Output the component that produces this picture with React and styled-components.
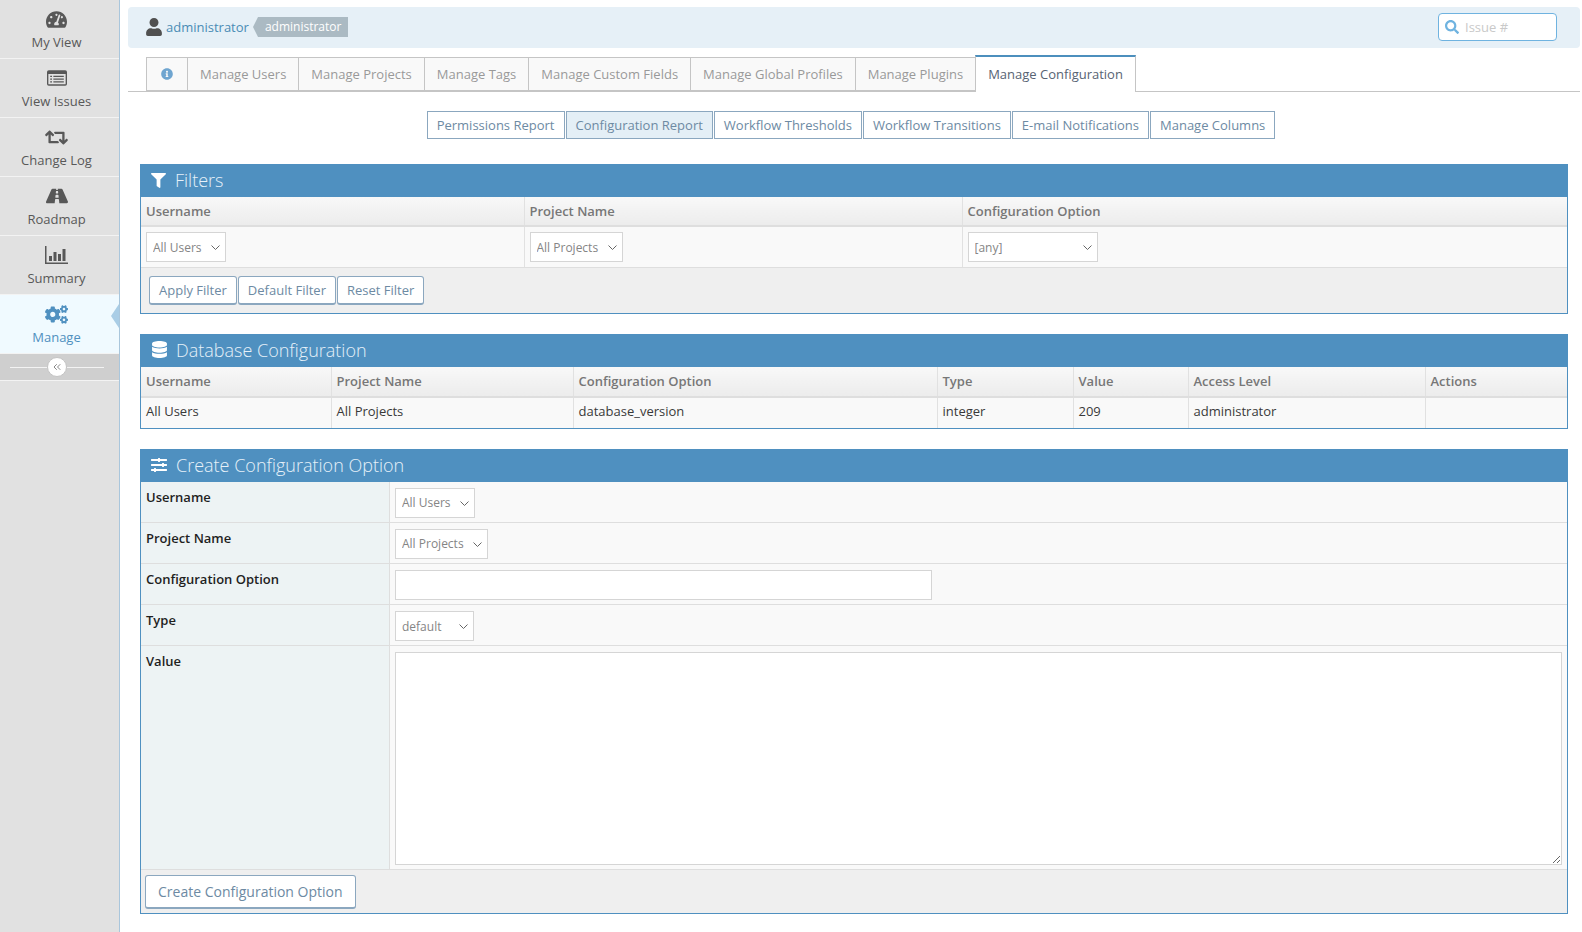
import React from "react";
import styled, { createGlobalStyle } from "styled-components";
import {
  FaTachometerAlt,
  FaRetweet,
  FaRoad,
  FaCogs,
  FaUser,
  FaInfoCircle,
  FaSearch,
  FaFilter,
  FaDatabase,
  FaSlidersH,
} from "react-icons/fa";
import { FiChevronsLeft } from "react-icons/fi";

const GlobalStyle = createGlobalStyle`
  html, body {
    margin: 0;
    padding: 0;
    background: #fff;
    font-family: "Open Sans", "Liberation Sans", sans-serif;
    font-size: 13px;
    color: #393939;
    overflow: hidden;
  }
  * { box-sizing: border-box; }
`;

const ListIcon = () => (
  <svg width="20" height="16" viewBox="0 0 22 17">
    <path
      fill="currentColor"
      fillRule="evenodd"
      d="M2 0h18a2 2 0 0 1 2 2v13a2 2 0 0 1-2 2H2a2 2 0 0 1-2-2V2a2 2 0 0 1 2-2zM1.500 4v11a.5.5 0 0 0 .5.5h18a.5.5 0 0 0 .5-.5V4z"
    />
    <path
      fill="currentColor"
      d="M3.500 6h2v1.500h-2zM3.500 9h2v1.500h-2zM3.500 12h2v1.500h-2zM7 6h11.500v1.500H7zM7 9h11.500v1.500H7zM7 12h11.500v1.500H7z"
    />
  </svg>
);

const ChartIcon = () => (
  <svg width="23" height="18" viewBox="0 0 23 18">
    <path fill="currentColor" d="M0 0h1.500v16.500H23V18H0z" />
    <path fill="currentColor" d="M4 10h3v5H4zM8.500 6h3v9h-3zM13 8h3v7h-3zM17.500 3h3v12h-3z" />
  </svg>
);

const Chevron = () => (
  <svg width="9" height="5" viewBox="0 0 9 5">
    <path d="M.5.5l4 4 4-4" fill="none" stroke="#666" strokeWidth="1" />
  </svg>
);

const navItems = [
  { label: "My View", icon: <FaTachometerAlt size={21} /> },
  { label: "View Issues", icon: <ListIcon /> },
  { label: "Change Log", icon: <FaRetweet size={23} /> },
  { label: "Roadmap", icon: <FaRoad size={22} /> },
  { label: "Summary", icon: <ChartIcon /> },
  { label: "Manage", icon: <FaCogs size={23} />, active: true },
];

const tabs = [
  "Manage Users",
  "Manage Projects",
  "Manage Tags",
  "Manage Custom Fields",
  "Manage Global Profiles",
  "Manage Plugins",
];

const reports = [
  { label: "Permissions Report" },
  { label: "Configuration Report", active: true },
  { label: "Workflow Thresholds" },
  { label: "Workflow Transitions" },
  { label: "E-mail Notifications" },
  { label: "Manage Columns" },
];

const dbColumns = [
  { label: "Username", width: 190 },
  { label: "Project Name", width: 242 },
  { label: "Configuration Option", width: 364 },
  { label: "Type", width: 136 },
  { label: "Value", width: 115 },
  { label: "Access Level", width: 237 },
  { label: "Actions" },
];

const dbRow = ["All Users", "All Projects", "database_version", "integer", "209", "administrator", ""];

const Page = styled.div`
  display: flex;
  min-height: 100vh;
`;

const Sidebar = styled.nav`
  width: 120px;
  flex: none;
  background: #e1e1e1;
  border-right: 1px solid #a9c6dc;
`;

const NavItem = styled.a`
  position: relative;
  display: flex;
  flex-direction: column;
  align-items: center;
  height: 59px;
  padding: 7px 6px 0 0;
  border-bottom: 1px solid #f3f3f3;
  background: ${(p) => (p.$active ? "#f0faff" : "#e1e1e1")};
  color: ${(p) => (p.$active ? "#4f90c0" : "#585858")};
  ${(p) =>
    p.$active &&
    `&::after {
      content: "";
      position: absolute;
      right: 0;
      top: 9px;
      border-style: solid;
      border-width: 12px 8px 12px 0;
      border-color: transparent #a9cde6 transparent transparent;
    }`}
`;

const NavIcon = styled.span`
  display: flex;
  align-items: center;
  justify-content: center;
  height: 24px;
`;

const NavLabel = styled.span`
  margin-top: 2px;
  line-height: 18px;
  font-size: 13px;
`;

const Toggler = styled.div`
  display: flex;
  align-items: center;
  height: 27px;
  padding: 0 15px 0 10px;
  background: #cfcfcf;
  border-bottom: 1px solid #f3f3f3;
`;

const TogglerLine = styled.span`
  flex: 1;
  height: 1px;
  background: #f3f3f3;
`;

const TogglerButton = styled.span`
  display: flex;
  align-items: center;
  justify-content: center;
  width: 20px;
  height: 20px;
  border-radius: 50%;
  background: #fff;
  border: 1px solid #c4c4c4;
  color: #888;
  font-size: 12px;
`;

const Main = styled.main`
  flex: 1;
  min-width: 0;
  padding: 7px 2px 0 8px;
`;

const TopBar = styled.header`
  display: flex;
  align-items: center;
  justify-content: space-between;
  height: 41px;
  padding: 0 23px 2px 17px;
  background: #e6f0f7;
  border-radius: 4px;
`;

const UserBox = styled.div`
  display: flex;
  align-items: center;
`;

const UserIcon = styled.span`
  display: flex;
  color: #505050;
  margin-right: 3px;
`;

const UserLink = styled.a`
  color: #4a8cb5;
  font-size: 13px;
`;

const Badge = styled.span`
  position: relative;
  margin-left: 9px;
  height: 20px;
  line-height: 20px;
  padding: 0 7px;
  background: #abbac3;
  color: #fff;
  font-size: 12px;
  &::before {
    content: "";
    position: absolute;
    left: -5px;
    top: 0;
    border-style: solid;
    border-width: 10px 5px 10px 0;
    border-color: transparent #abbac3 transparent transparent;
  }
`;

const SearchBox = styled.label`
  display: flex;
  align-items: center;
  gap: 6px;
  width: 119px;
  height: 28px;
  padding: 0 6px;
  background: #fff;
  border: 1px solid #6fb3e0;
  border-radius: 4px;
  color: #6fb3e0;
`;

const SearchInput = styled.input`
  width: 70px;
  border: 0;
  outline: 0;
  padding: 0;
  font: inherit;
  &::placeholder {
    color: #c9c9c9;
  }
`;

const TabRow = styled.div`
  display: flex;
  height: 35px;
  margin-top: 9px;
  padding-left: 18px;
  border-bottom: 1px solid #c5c5c5;
`;

const Tab = styled.a`
  position: relative;
  display: flex;
  align-items: center;
  justify-content: center;
  height: 34px;
  padding: 0 12px;
  margin-right: -1px;
  background: #f9f9f9;
  color: #999;
  border: 1px solid #c5c5c5;
  ${(p) =>
    p.$active &&
    `
    z-index: 1;
    height: 37px;
    margin-top: -2px;
    padding-bottom: 2px;
    background: #fff;
    color: #576373;
    border-top: 2px solid #4c8fbd;
    border-bottom: 0;
  `}
`;

const InfoTab = styled(Tab)`
  width: 42px;
  padding: 0;
  color: #6fa5d0;
`;

const ReportRow = styled.div`
  display: flex;
  justify-content: center;
  gap: 1px;
  margin: 19px 0 25px;
  padding-right: 6px;
`;

const ReportLink = styled.a`
  display: flex;
  align-items: center;
  height: 28px;
  padding: 0 9px;
  border: 1px solid #8ba7bf;
  background: ${(p) => (p.$active ? "#e4eff6" : "#fff")};
  color: #6d8aa3;
`;

const Content = styled.div`
  padding: 0 12px;
`;

const Panel = styled.section`
  border: 1px solid #4f90c0;
  margin-bottom: 20px;
  background: #fff;
`;

const PanelHeader = styled.h4`
  display: flex;
  align-items: center;
  gap: 8px;
  height: 32px;
  margin: 0;
  padding: 0 9px 2px;
  background: #4f90c0;
  color: #e6f1f9;
  font-size: 18px;
  font-weight: 300;
`;

const HeaderIcon = styled.span`
  display: flex;
  justify-content: center;
  width: ${(p) => p.$width || "18px"};
  color: #fff;
`;

const DataTable = styled.table`
  width: 100%;
  border-collapse: collapse;
  table-layout: fixed;
`;

const HeadCell = styled.th`
  height: ${(p) => (p.$tall ? "30px" : "29px")};
  padding: 0 5px;
  text-align: left;
  font-weight: 600;
  color: #777;
  background: linear-gradient(#f8f8f8, #ececec);
  border-bottom: 2px solid #dedede;
  border-left: 1px solid #e1e1e1;
  &:first-child {
    border-left: 0;
  }
`;

const BodyCell = styled.td`
  height: ${(p) => p.$height || "31px"};
  padding: ${(p) => (p.$height ? "1px 5px 0" : "0 5px 4px")};
  background: #f9f9f9;
  color: #393939;
  border-left: 1px solid #e1e1e1;
  border-bottom: ${(p) => (p.$height ? "1px solid #dedede" : "0")};
  &:first-child {
    border-left: 0;
  }
`;

const FormRow = styled.div`
  display: grid;
  grid-template-columns: 249px 1fr;
  min-height: 41.2px;
  border-bottom: 1px solid #dedede;
`;

const FormLabel = styled.label`
  padding: 6px 5px;
  background: #edf3f4;
  border-right: 1px solid #dedede;
  color: #1f1f1f;
  font-weight: 600;
  line-height: 18px;
`;

const FormField = styled.div`
  padding: 6px 5px 4px;
  background: #f9f9f9;
`;

const SelectWrap = styled.span`
  position: relative;
  display: inline-flex;
  vertical-align: top;
  & > svg {
    position: absolute;
    right: 6px;
    top: 13px;
    pointer-events: none;
  }
`;

const Select = styled.select`
  appearance: none;
  height: 30px;
  padding: 0 6px;
  width: ${(p) => p.$width};
  border: 1px solid #d5d5d5;
  border-radius: 0;
  background: #fff;
  color: #858585;
  font-family: inherit;
  font-size: 12px;
  outline: 0;
`;

const TextInput = styled.input`
  display: block;
  width: 537px;
  height: 30px;
  border: 1px solid #d5d5d5;
  background: #fff;
  outline: 0;
`;

const TextArea = styled.textarea`
  display: block;
  width: 100%;
  height: 213px;
  border: 1px solid #d5d5d5;
  background: #fff;
  outline: 0;
`;

const PanelFooter = styled.div`
  display: flex;
  gap: 1px;
  padding: ${(p) => p.$padding};
  background: #efefef;
`;

const Button = styled.button`
  height: ${(p) => (p.$large ? "34px" : "29px")};
  padding: ${(p) => (p.$large ? "0 12px" : "0 9px")};
  background: #fff;
  border: 1px solid #8ba7bf;
  border-bottom-width: 2px;
  border-radius: 3px;
  color: #6d8aa3;
  font-family: inherit;
  font-size: ${(p) => (p.$large ? "14px" : "13px")};
`;

const SelectCell = ({ width, children }) => (
  <SelectWrap>
    <Select $width={width}>{children}</Select>
    <Chevron />
  </SelectWrap>
);

const FormLine = ({ label, children }) => (
  <FormRow>
    <FormLabel>{label}</FormLabel>
    <FormField>{children}</FormField>
  </FormRow>
);

export default function App() {
  return (
    <Page>
      <GlobalStyle />
      <Sidebar>
        {navItems.map((item) => (
          <NavItem key={item.label} $active={item.active}>
            <NavIcon>{item.icon}</NavIcon>
            <NavLabel>{item.label}</NavLabel>
          </NavItem>
        ))}
        <Toggler>
          <TogglerLine />
          <TogglerButton>
            <FiChevronsLeft />
          </TogglerButton>
          <TogglerLine />
        </Toggler>
      </Sidebar>
      <Main>
        <TopBar>
          <UserBox>
            <UserIcon>
              <FaUser size={18} />
            </UserIcon>
            <UserLink>administrator</UserLink>
            <Badge>administrator</Badge>
          </UserBox>
          <SearchBox>
            <FaSearch size={14} />
            <SearchInput placeholder="Issue #" />
          </SearchBox>
        </TopBar>
        <TabRow>
          <InfoTab>
            <FaInfoCircle size={12} />
          </InfoTab>
          {tabs.map((t) => (
            <Tab key={t}>{t}</Tab>
          ))}
          <Tab $active>Manage Configuration</Tab>
        </TabRow>
        <ReportRow>
          {reports.map((r) => (
            <ReportLink key={r.label} $active={r.active}>
              {r.label}
            </ReportLink>
          ))}
        </ReportRow>
        <Content>
          <Panel>
            <PanelHeader>
              <HeaderIcon $width="17px">
                <FaFilter size={15} />
              </HeaderIcon>
              Filters
            </PanelHeader>
            <DataTable>
              <colgroup>
                <col style={{ width: 383 }} />
                <col style={{ width: 438 }} />
                <col />
              </colgroup>
              <thead>
                <tr>
                  <HeadCell>Username</HeadCell>
                  <HeadCell>Project Name</HeadCell>
                  <HeadCell>Configuration Option</HeadCell>
                </tr>
              </thead>
              <tbody>
                <tr>
                  <BodyCell $height="41px">
                    <SelectCell width="80px">
                      <option>All Users</option>
                    </SelectCell>
                  </BodyCell>
                  <BodyCell $height="41px">
                    <SelectCell width="93px">
                      <option>All Projects</option>
                    </SelectCell>
                  </BodyCell>
                  <BodyCell $height="41px">
                    <SelectCell width="130px">
                      <option>[any]</option>
                    </SelectCell>
                  </BodyCell>
                </tr>
              </tbody>
            </DataTable>
            <PanelFooter $padding="8px 8px 8px">
              <Button>Apply Filter</Button>
              <Button>Default Filter</Button>
              <Button>Reset Filter</Button>
            </PanelFooter>
          </Panel>
          <Panel>
            <PanelHeader>
              <HeaderIcon>
                <FaDatabase size={17} />
              </HeaderIcon>
              Database Configuration
            </PanelHeader>
            <DataTable>
              <colgroup>
                {dbColumns.map((c) => (
                  <col key={c.label} style={{ width: c.width }} />
                ))}
              </colgroup>
              <thead>
                <tr>
                  {dbColumns.map((c) => (
                    <HeadCell key={c.label} $tall>
                      {c.label}
                    </HeadCell>
                  ))}
                </tr>
              </thead>
              <tbody>
                <tr>
                  {dbRow.map((v, i) => (
                    <BodyCell key={i}>{v}</BodyCell>
                  ))}
                </tr>
              </tbody>
            </DataTable>
          </Panel>
          <Panel>
            <PanelHeader>
              <HeaderIcon>
                <FaSlidersH size={16} />
              </HeaderIcon>
              Create Configuration Option
            </PanelHeader>
            <FormLine label="Username">
              <SelectCell width="80px">
                <option>All Users</option>
              </SelectCell>
            </FormLine>
            <FormLine label="Project Name">
              <SelectCell width="93px">
                <option>All Projects</option>
              </SelectCell>
            </FormLine>
            <FormLine label="Configuration Option">
              <TextInput />
            </FormLine>
            <FormLine label="Type">
              <SelectCell width="79px">
                <option>default</option>
              </SelectCell>
            </FormLine>
            <FormLine label="Value">
              <TextArea />
            </FormLine>
            <PanelFooter $padding="5px 4px 4px">
              <Button $large>Create Configuration Option</Button>
            </PanelFooter>
          </Panel>
        </Content>
      </Main>
    </Page>
  );
}
